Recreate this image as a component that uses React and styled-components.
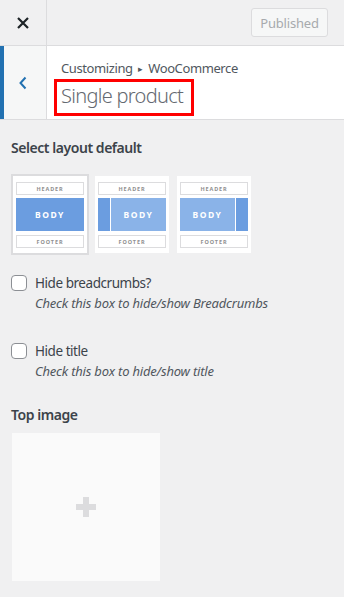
import React from "react";
import styled, { createGlobalStyle } from "styled-components";

const Global = createGlobalStyle`
  html, body { margin: 0; padding: 0; background: #f0f0f1; }
  body { font-family: "Noto Sans", "Open Sans", sans-serif; color: #3c434a; }
  * { box-sizing: border-box; }
`;

const Page = styled.div`
  width: 344px;
  min-height: 597px;
  background: #f0f0f1;
`;

const TopBar = styled.div`
  height: 46px;
  display: flex;
  align-items: center;
  border-bottom: 1px solid #dcdcde;
  background: #f0f0f1;
`;

const CloseBtn = styled.div`
  width: 47px;
  height: 45px;
  border-right: 1px solid #dcdcde;
  display: flex;
  align-items: center;
  justify-content: center;
`;

const Spacer = styled.div`
  flex: 1;
`;

const PublishBtn = styled.div`
  margin-right: 16px;
  width: 77px;
  height: 29px;
  border: 1px solid #dcdcde;
  border-radius: 3px;
  background: #f6f7f7;
  color: #a7aaad;
  font-size: 13px;
  letter-spacing: -0.2px;
  display: flex;
  align-items: center;
  justify-content: center;
`;

const TitleSection = styled.div`
  display: flex;
  height: 74px;
  background: #fff;
  border-bottom: 1px solid #dcdcde;
`;

const BackBtn = styled.div`
  width: 47px;
  border-left: 4px solid #2271b1;
  border-right: 1px solid #dcdcde;
  background: #f6f7f7;
  display: flex;
  align-items: center;
  justify-content: center;
  padding-right: 4px;
`;

const TitleBlock = styled.div`
  padding: 13px 0 0 14px;
  display: flex;
  flex-direction: column;
  align-items: flex-start;
`;

const Crumb = styled.div`
  font-size: 13px;
  color: #50575e;
  line-height: 18px;
  letter-spacing: -0.4px;
  white-space: nowrap;
`;

const Arrow = styled.span`
  font-size: 9px;
  margin: 0 6px 0 5px;
  position: relative;
  top: -1px;
`;

const Title = styled.div`
  margin-left: -7px;
  border: 3px solid #ff0000;
  padding: 0 8px 0 4px;
  height: 37px;
  font-size: 20px;
  font-weight: 300;
  color: #646970;
  line-height: 28px;
  letter-spacing: -0.7px;
  white-space: nowrap;
`;

const Content = styled.div`
  padding: 18px 11px 0 11px;
`;

const SectionLabel = styled.div`
  font-size: 14px;
  font-weight: 600;
  color: #3c434a;
  line-height: 20px;
  letter-spacing: -0.45px;
`;

const Thumbs = styled.div`
  display: flex;
  gap: 4px;
  margin-top: 16px;
`;

const Thumb = styled.div`
  border: 2px solid ${(p) => (p.$selected ? "#dcdcde" : "transparent")};
  background: #f0f0f1;
`;

const ThumbInner = styled.div`
  width: 74px;
  height: 77px;
  background: #fff;
  padding: 6px 3px 5px;
  display: flex;
  flex-direction: column;
`;

const SmallBox = styled.div`
  height: 13px;
  border: 1px solid #dcdcde;
  background: #fff;
  color: #909090;
  font-size: 5.5px;
  font-weight: 700;
  letter-spacing: 0.9px;
  display: flex;
  align-items: center;
  justify-content: center;
  margin-top: ${(p) => p.$mt || 0}px;
`;

const BodyRow = styled.div`
  height: 33px;
  margin-top: 3px;
  display: flex;
  flex-direction: ${(p) => (p.$reverse ? "row-reverse" : "row")};
  gap: 1px;
`;

const Side = styled.div`
  width: 12px;
  background: #6b9de0;
`;

const Main = styled.div`
  flex: 1;
  background: ${(p) => (p.$full ? "#6b9de0" : "#8ab3e8")};
  color: #fff;
  font-size: 8.5px;
  font-weight: 700;
  letter-spacing: 1.5px;
  display: flex;
  align-items: center;
  justify-content: center;
`;

const CheckRow = styled.div`
  display: flex;
  gap: 8px;
  margin-top: ${(p) => p.$mt}px;
`;

const Box = styled.div`
  width: 16px;
  height: 16px;
  border: 1px solid #8c8f94;
  border-radius: 4px;
  background: #fff;
  flex-shrink: 0;
`;

const CheckText = styled.div`
  display: flex;
  flex-direction: column;
`;

const CheckLabel = styled.div`
  font-size: 13.5px;
  color: #3c434a;
  line-height: 17px;
  letter-spacing: -0.45px;
`;

const Desc = styled.div`
  font-size: 13px;
  font-style: italic;
  color: #50575e;
  line-height: 18px;
  margin-top: 2px;
  letter-spacing: -0.2px;
`;

const ImageLabel = styled(SectionLabel)`
  margin-top: 25px;
`;

const ImageBox = styled.div`
  margin-top: 8px;
  margin-left: 1px;
  width: 148px;
  height: 148px;
  background: #fafafa;
  display: flex;
  align-items: center;
  justify-content: center;
`;

const Layout = ({ kind }) => (
  <ThumbInner>
    <SmallBox>HEADER</SmallBox>
    <BodyRow $reverse={kind === "right"}>
      {kind !== "full" && <Side />}
      <Main $full={kind === "full"}>BODY</Main>
    </BodyRow>
    <SmallBox $mt={4}>FOOTER</SmallBox>
  </ThumbInner>
);

export default function App() {
  return (
    <Page>
      <Global />
      <TopBar>
        <CloseBtn>
          <svg width="12" height="12" viewBox="0 0 12 12">
            <path d="M1 1 L11 11 M11 1 L1 11" stroke="#1d2327" strokeWidth="2.2" />
          </svg>
        </CloseBtn>
        <Spacer />
        <PublishBtn>Published</PublishBtn>
      </TopBar>
      <TitleSection>
        <BackBtn>
          <svg width="10" height="14" viewBox="0 0 10 14">
            <path d="M7.5 1.5 L2.5 7 L7.5 12.5" fill="none" stroke="#2271b1" strokeWidth="2" />
          </svg>
        </BackBtn>
        <TitleBlock>
          <Crumb>
            Customizing<Arrow>▸</Arrow>WooCommerce
          </Crumb>
          <Title>Single product</Title>
        </TitleBlock>
      </TitleSection>
      <Content>
        <SectionLabel>Select layout default</SectionLabel>
        <Thumbs>
          <Thumb $selected>
            <Layout kind="full" />
          </Thumb>
          <Thumb>
            <Layout kind="left" />
          </Thumb>
          <Thumb>
            <Layout kind="right" />
          </Thumb>
        </Thumbs>
        <CheckRow $mt={20}>
          <Box />
          <CheckText>
            <CheckLabel>Hide breadcrumbs?</CheckLabel>
            <Desc>Check this box to hide/show Breadcrumbs</Desc>
          </CheckText>
        </CheckRow>
        <CheckRow $mt={31}>
          <Box />
          <CheckText>
            <CheckLabel>Hide title</CheckLabel>
            <Desc>Check this box to hide/show title</Desc>
          </CheckText>
        </CheckRow>
        <ImageLabel>Top image</ImageLabel>
        <ImageBox>
          <svg width="20" height="20" viewBox="0 0 20 20">
            <path d="M7 0 H13 V7 H20 V13 H13 V20 H7 V13 H0 V7 H7 Z" fill="#dcdcde" />
          </svg>
        </ImageBox>
      </Content>
    </Page>
  );
}
